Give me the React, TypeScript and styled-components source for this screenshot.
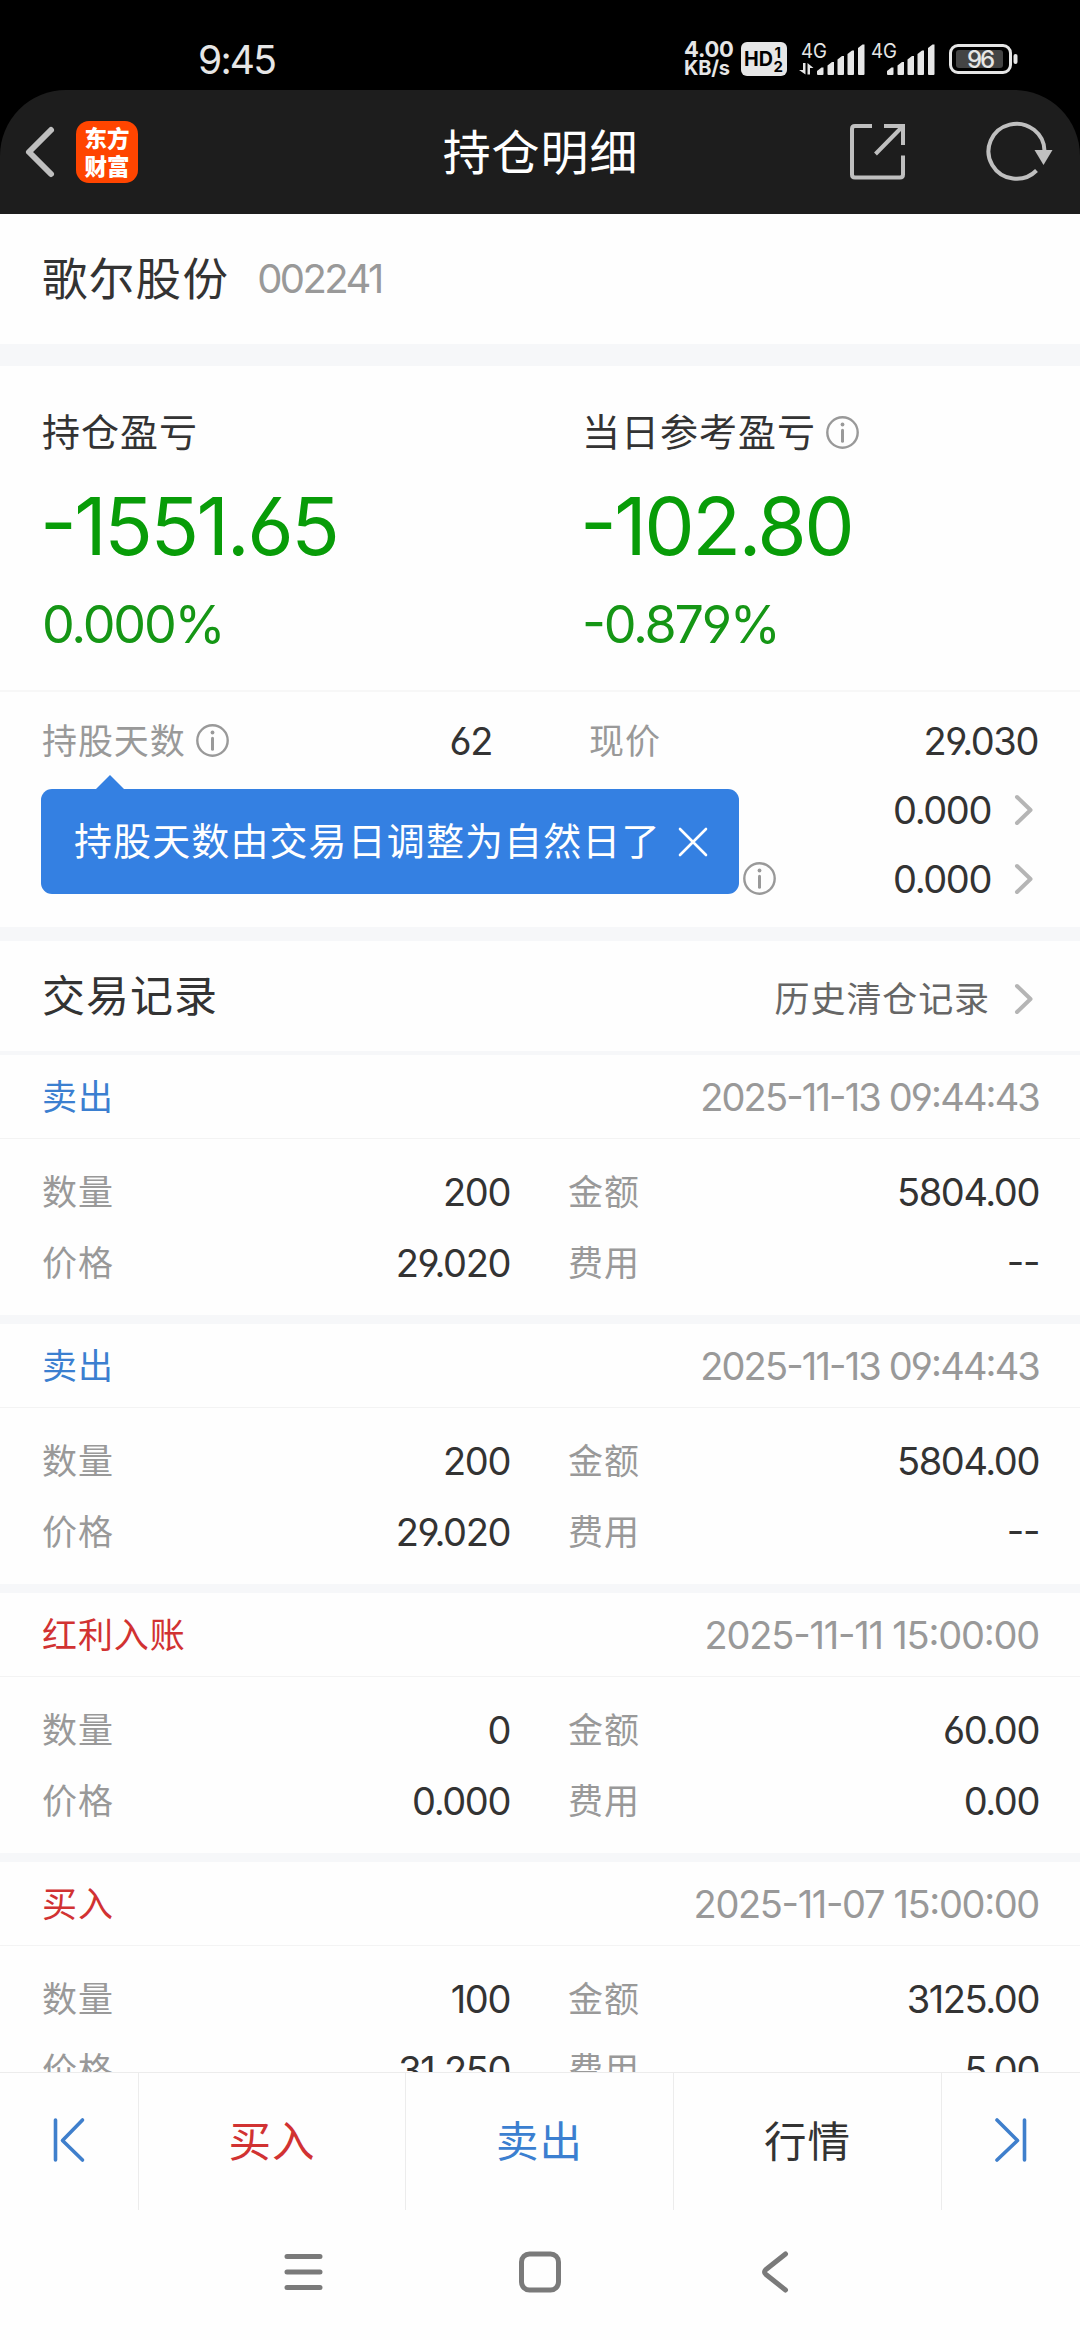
import React from 'react';
import styled, { createGlobalStyle } from 'styled-components';

const GlobalStyle = createGlobalStyle`
  *, *::before, *::after { box-sizing: border-box; }
  body { margin: 0; background: #fefefe; }
  svg { display: block; flex: none; overflow: visible; }
`;

const CJK = "'Noto Sans CJK SC', sans-serif";
const LATIN = "Inter, 'Noto Sans CJK SC', sans-serif";

const Screen = styled.div`
  width: 1080px;
  height: 2340px;
  display: flex;
  flex-direction: column;
  overflow: hidden;
  background: #fefefe;
  color: #333;
  font-family: ${CJK};
`;

/* ---------- text ---------- */

const Label = styled.span<{ $size?: number; $gap?: number; $color?: string; $weight?: number }>`
  font-family: ${CJK};
  font-size: ${(p) => p.$size ?? 35}px;
  letter-spacing: ${(p) => p.$gap ?? 0.9}px;
  color: ${(p) => p.$color ?? '#999'};
  font-weight: ${(p) => p.$weight ?? 400};
  line-height: 1;
  margin-bottom: 0.11em;
  white-space: nowrap;
`;

const Figure = styled.span<{ $size?: number; $gap?: number; $color?: string; $weight?: number }>`
  font-family: ${LATIN};
  font-size: ${(p) => p.$size ?? 38}px;
  letter-spacing: ${(p) => p.$gap ?? -1.4}px;
  color: ${(p) => p.$color ?? '#333'};
  font-weight: ${(p) => p.$weight ?? 400};
  font-feature-settings: 'cv03', 'cv04', 'case';
  line-height: 1;
  white-space: nowrap;
`;

const HeroFigure = styled(Figure)`
  font-size: 80px;
  letter-spacing: -2.5px;
  color: #089c08;
  margin-left: -2px;
`;

const PercentFigure = styled(Figure)`
  font-size: 52px;
  letter-spacing: -2.2px;
  color: #159615;
`;

/* ---------- status bar and title bar ---------- */

const TopArea = styled.header`
  flex: none;
  height: 214px;
  background: #000;
`;

const StatusBar = styled.div`
  height: 90px;
  padding: 30px 61px 0 198px;
  display: flex;
  justify-content: space-between;
`;

const Clock = styled.span`
  font: 400 39px/60px ${LATIN};
  color: #e6e6e6;
  letter-spacing: -1.8px;
`;

const StatusIcons = styled.div`
  display: flex;
  height: 58px;
  align-items: center;
`;

const NetSpeed = styled.div`
  width: 50px;
  margin-right: 7px;
  display: flex;
  flex-direction: column;
  font: 700 22px/19px ${LATIN};
  color: #e6e6e6;
  letter-spacing: -0.2px;
`;

const SpeedUnit = styled.span`
  font-size: 20px;
  letter-spacing: -0.2px;
`;

const TitleBar = styled.div`
  height: 124px;
  border-radius: 66px 66px 0 0;
  background: #1d1d1d;
  display: grid;
  grid-template-columns: 1fr auto 1fr;
  align-items: center;
  padding: 0 26px 0 24px;
`;

const TitleLeft = styled.div`
  display: flex;
  align-items: center;
  gap: 20px;
`;

const TitleRight = styled.div`
  display: flex;
  align-items: center;
  justify-content: flex-end;
  gap: 80px;
`;

const Logo = styled.div`
  width: 62px;
  height: 62px;
  border-radius: 13px;
  background: #ff4500;
  color: #fff;
  font: 900 22.5px/27px ${CJK};
  text-align: center;
  padding-top: 3px;
`;

const LogoLine = styled.div`
  height: 27.5px;
`;

const PageTitle = styled(Label)`
  font-size: 48px;
  letter-spacing: 0.9px;
  color: #fff;
  padding-left: 3px;
`;

/* ---------- sections ---------- */

const Content = styled.main`
  flex: none;
  height: 1858px;
  overflow: hidden;
`;

const Band = styled.div<{ $h: number }>`
  height: ${(p) => p.$h}px;
  background: #f6f7f9;
`;

const Stock = styled.section`
  height: 130px;
  padding: 0 42px;
  display: flex;
  align-items: center;
  gap: 28px;
`;

const Summary = styled.section`
  height: 326px;
  padding: 41px 0 0 42px;
  display: grid;
  grid-template-columns: 540px 1fr;
  border-bottom: 2px solid #f7f7f7;
`;

const SummaryColumn = styled.div`
  display: flex;
  flex-direction: column;
`;

const SummaryLine = styled.div<{ $h: number }>`
  height: ${(p) => p.$h}px;
  display: flex;
  align-items: center;
  gap: 10px;
`;

const Details = styled.section`
  position: relative;
  height: 235px;
  padding: 14px 42px 0;
`;

const DetailRow = styled.div`
  height: 69px;
  display: grid;
  grid-template-columns: 450px 97px 1fr auto;
  align-items: center;
`;

const DetailCell = styled.div<{ $pull?: number }>`
  display: flex;
  align-items: center;
  gap: 10px;
  margin-left: ${(p) => p.$pull ?? 0}px;
`;

const DetailMain = styled(DetailCell)`
  justify-content: space-between;
`;

const LinkedValue = styled.div`
  display: flex;
  align-items: center;
  gap: 24px;
  padding-right: 5px;
`;

const Tooltip = styled.div`
  position: absolute;
  left: 41px;
  top: 97px;
  width: 698px;
  height: 105px;
  border-radius: 11px;
  background: #3480e2;
  display: flex;
  align-items: center;
  padding-left: 33px;
  gap: 17px;

  &::before {
    content: '';
    position: absolute;
    left: 55px;
    top: -14px;
    border: solid transparent;
    border-width: 0 14px 14px;
    border-bottom-color: #3480e2;
  }
`;

const SectionHead = styled.div`
  height: 110px;
  padding: 0 47px 0 42px;
  display: flex;
  align-items: center;
  justify-content: space-between;
`;

const HeadLink = styled.div`
  display: flex;
  align-items: center;
  gap: 25px;
  padding-top: 5px;
`;

const RecordTop = styled.div`
  height: 84px;
  padding: 0 41px 0 42px;
  display: flex;
  align-items: center;
  justify-content: space-between;
  border-bottom: 1px solid #f3f3f3;
`;

const RecordBody = styled.div`
  height: 176px;
  padding: 17px 41px 0 42px;
  display: grid;
  grid-template-columns: 468px 58px 1fr;
  grid-template-rows: 71px 71px;
`;

const Pair = styled.div<{ $col: number }>`
  grid-column: ${(p) => p.$col};
  display: flex;
  align-items: center;
  justify-content: space-between;
`;

/* ---------- bottom ---------- */

const ActionBar = styled.nav`
  flex: none;
  height: 138px;
  display: grid;
  grid-template-columns: 139px 267px 268px 268px 138px;
  border-top: 1px solid #ececec;
`;

const Action = styled.div`
  display: flex;
  align-items: center;
  justify-content: center;
  border-right: 1px solid #ececec;

  &:last-child { border-right: 0; }
`;

const SystemNav = styled.div`
  flex: none;
  height: 130px;
  display: flex;
  justify-content: center;
  align-items: center;
  gap: 192px;
  padding-bottom: 6px;
`;

/* ---------- icons ---------- */

const InfoIcon = () => (
  <svg width="33" height="33" viewBox="0 0 33 33" fill="none" stroke="#999">
    <circle cx="16.5" cy="16.5" r="15.2" strokeWidth="2.4" />
    <circle cx="16.5" cy="8.5" r="1.9" fill="#999" stroke="none" />
    <path d="M16.5 14.2v11" strokeWidth="3" strokeLinecap="round" />
  </svg>
);

const ArrowRight = () => (
  <svg width="18" height="30" viewBox="0 0 18 30" fill="none">
    <path d="M2 2 L15.5 15 L2 28" stroke="#b5b5b5" strokeWidth="4" strokeLinecap="round" strokeLinejoin="round" />
  </svg>
);

const EdgeIcon = ({ flip }: { flip?: boolean }) => (
  <svg width="34" height="50" viewBox="0 0 34 50" fill="none" stroke="#3f7fcc" strokeWidth="3.6" strokeLinecap="round" strokeLinejoin="round">
    {flip ? (
      <path d="M30.5 3v40M3 3l20.5 20.5L3 43" />
    ) : (
      <path d="M3.5 3v40M30.5 3L10.5 23.5L30.5 43" />
    )}
  </svg>
);

const Bars = ({ arrows }: { arrows?: boolean }) => (
  <svg width="68" height="36" viewBox="0 0 68 36" fill="#e6e6e6">
    <text x="3" y="17" fontFamily="Inter" fontSize="19.5" textLength="26" lengthAdjust="spacingAndGlyphs">4G</text>
    {arrows && <path d="M5 22h2.500v11.5L1 29h4zM9.500 33.500V22l6 5h-3.500v6.500z" />}
    {[
      [19, 26.5],
      [29.5, 21],
      [39.5, 15],
      [49.5, 9.5],
      [60, 3.5],
    ].map(([x, y]) => (
      <path key={x} d={`M${x} ${y + 3.6}L${x + 4.5} ${y}h2V33q0 1 -1 1h-4.5q-1 0 -1 -1z`} />
    ))}
  </svg>
);

const HdBadge = () => (
  <svg width="46" height="34" viewBox="0 0 46 34" fill="#000" fontFamily="Inter" fontWeight="700">
    <rect width="46" height="34" rx="6" fill="#e6e6e6" />
    <text x="3" y="24" fontSize="19.5" textLength="29" lengthAdjust="spacingAndGlyphs">HD</text>
    <text x="33.5" y="15.500" fontSize="15">1</text>
    <text x="32.5" y="30" fontSize="15">2</text>
  </svg>
);

const Battery = () => (
  <svg width="70" height="31" viewBox="0 0 70 31">
    <rect x="1.5" y="1.5" width="60" height="27" rx="7.5" fill="none" stroke="#e6e6e6" strokeWidth="3" />
    <rect x="7" y="6" width="47" height="18" rx="3" fill="#444" />
    <rect x="64.5" y="10" width="4" height="10" rx="2" fill="#e6e6e6" />
    <text x="31" y="23.6" textAnchor="middle" fontFamily="Inter" fontWeight="500" fontSize="24" letterSpacing="-2" fill="#e6e6e6">96</text>
  </svg>
);

const BackIcon = () => (
  <svg width="32" height="52" viewBox="0 0 32 52" fill="none">
    <path d="M27 4L5 26L27 48" stroke="#bfbfbf" strokeWidth="6" strokeLinecap="round" strokeLinejoin="round" />
  </svg>
);

const ShareIcon = () => (
  <svg width="56" height="56" viewBox="0 0 56 56" fill="none" stroke="#bfbfbf" strokeWidth="4">
    <path d="M22 2H5Q2 2 2 5V50.5Q2 53.5 5 53.5H50Q53 53.5 53 50.5V31.5" />
    <path d="M34 2H53V21M52 3L25.5 30" />
  </svg>
);

const RefreshIcon = () => (
  <svg width="68" height="60" viewBox="0 0 68 60" fill="none">
    <path d="M58.5 30A28 27.5 0 1 0 50.5 48.5" stroke="#bfbfbf" strokeWidth="4" />
    <path d="M48.5 28H66.500L57.5 43z" fill="#bfbfbf" />
  </svg>
);

/* ---------- data ---------- */

const BLUE = '#3b7fd0';
const RED = '#d13232';

type Trade = {
  kind: string;
  color: string;
  time: string;
  timeGap: number;
  count: string;
  amount: string;
  price: string;
  fee: string;
};

const trades: Trade[] = [
  { kind: '卖出', color: BLUE, time: '2025-11-13 09:44:43', timeGap: -1.85, count: '200', amount: '5804.00', price: '29.020', fee: '--' },
  { kind: '卖出', color: BLUE, time: '2025-11-13 09:44:43', timeGap: -1.85, count: '200', amount: '5804.00', price: '29.020', fee: '--' },
  { kind: '红利入账', color: RED, time: '2025-11-11 15:00:00', timeGap: -1.2, count: '0', amount: '60.00', price: '0.000', fee: '0.00' },
  { kind: '买入', color: RED, time: '2025-11-07 15:00:00', timeGap: -1.35, count: '100', amount: '3125.00', price: '31.250', fee: '5.00' },
];

const Record = ({ trade }: { trade: Trade }) => (
  <article>
    <RecordTop>
      <Label $color={trade.color}>{trade.kind}</Label>
      <Figure $color="#999" $gap={trade.timeGap}>{trade.time}</Figure>
    </RecordTop>
    <RecordBody>
      <Pair $col={1}>
        <Label>数量</Label>
        <Figure>{trade.count}</Figure>
      </Pair>
      <Pair $col={3}>
        <Label>金额</Label>
        <Figure>{trade.amount}</Figure>
      </Pair>
      <Pair $col={1}>
        <Label>价格</Label>
        <Figure>{trade.price}</Figure>
      </Pair>
      <Pair $col={3}>
        <Label>费用</Label>
        <Figure>{trade.fee}</Figure>
      </Pair>
    </RecordBody>
    <Band $h={9} />
  </article>
);

export default function App() {
  return (
    <Screen>
      <GlobalStyle />
      <TopArea>
        <StatusBar>
          <Clock>9:45</Clock>
          <StatusIcons>
            <NetSpeed>
              <span>4.00</span>
              <SpeedUnit>KB/s</SpeedUnit>
            </NetSpeed>
            <HdBadge />
            <svg width="11" height="1" />
            <Bars arrows />
            <svg width="2" height="1" />
            <Bars />
            <svg width="13" height="1" />
            <Battery />
          </StatusIcons>
        </StatusBar>
        <TitleBar>
          <TitleLeft>
            <BackIcon />
            <Logo>
              <LogoLine>东方</LogoLine>
              <LogoLine>财富</LogoLine>
            </Logo>
          </TitleLeft>
          <PageTitle>持仓明细</PageTitle>
          <TitleRight>
            <ShareIcon />
            <RefreshIcon />
          </TitleRight>
        </TitleBar>
      </TopArea>

      <Content>
        <Stock>
          <Label $size={45.5} $gap={1.3} $color="#333">歌尔股份</Label>
          <Figure $size={40} $gap={-2.6} $color="#999">002241</Figure>
        </Stock>
        <Band $h={22} />
        <Summary>
          <SummaryColumn>
            <SummaryLine $h={50}>
              <Label $size={38} $gap={1} $color="#333">持仓盈亏</Label>
            </SummaryLine>
            <SummaryLine $h={137}>
              <HeroFigure>-1551.65</HeroFigure>
            </SummaryLine>
            <SummaryLine $h={62}>
              <PercentFigure>0.000%</PercentFigure>
            </SummaryLine>
          </SummaryColumn>
          <SummaryColumn>
            <SummaryLine $h={50}>
              <Label $size={38} $gap={1} $color="#333">当日参考盈亏</Label>
              <InfoIcon />
            </SummaryLine>
            <SummaryLine $h={137}>
              <HeroFigure>-102.80</HeroFigure>
            </SummaryLine>
            <SummaryLine $h={62}>
              <PercentFigure>-0.879%</PercentFigure>
            </SummaryLine>
          </SummaryColumn>
        </Summary>

        <Details>
          <DetailRow>
            <DetailMain>
              <DetailCell>
                <Label>持股天数</Label>
                <InfoIcon />
              </DetailCell>
              <Figure>62</Figure>
            </DetailMain>
            <span />
            <Label>现价</Label>
            <Figure>29.030</Figure>
          </DetailRow>
          <DetailRow>
            <span />
            <span />
            <span />
            <LinkedValue>
              <Figure>0.000</Figure>
              <ArrowRight />
            </LinkedValue>
          </DetailRow>
          <DetailRow>
            <span />
            <span />
            <DetailCell $pull={154}>
              <InfoIcon />
            </DetailCell>
            <LinkedValue>
              <Figure>0.000</Figure>
              <ArrowRight />
            </LinkedValue>
          </DetailRow>
          <Tooltip>
            <Label $size={38} $gap={1.1} $color="#fff">持股天数由交易日调整为自然日了</Label>
            <svg width="30" height="30" viewBox="0 0 30 30">
              <path d="M2 2L28 28M28 2L2 28" stroke="#fff" strokeWidth="2.6" strokeLinecap="round" />
            </svg>
          </Tooltip>
        </Details>

        <Band $h={14} />
        <SectionHead>
          <Label $size={43} $gap={1} $color="#333">交易记录</Label>
          <HeadLink>
            <Label $color="#666">历史清仓记录</Label>
            <ArrowRight />
          </HeadLink>
        </SectionHead>
        <Band $h={4} />
        {trades.map((trade, i) => (
          <Record key={i} trade={trade} />
        ))}
      </Content>

      <ActionBar>
        <Action><EdgeIcon /></Action>
        <Action><Label $size={42.5} $gap={1} $color={RED}>买入</Label></Action>
        <Action><Label $size={42.5} $gap={1} $color={BLUE}>卖出</Label></Action>
        <Action><Label $size={42.5} $gap={1} $color="#333">行情</Label></Action>
        <Action><EdgeIcon flip /></Action>
      </ActionBar>

      <SystemNav>
        <svg width="44" height="44" viewBox="0 0 44 44" fill="none" stroke="#7a7a7a" strokeWidth="5" strokeLinecap="round">
          <path d="M5 6.5h33M5 22h33M5 37.5h33" />
        </svg>
        <svg width="44" height="44" viewBox="0 0 44 44" fill="none" stroke="#7a7a7a" strokeWidth="5">
          <rect x="3.5" y="4" width="37" height="36" rx="8" />
        </svg>
        <svg width="44" height="44" viewBox="0 0 44 44" fill="none" stroke="#7a7a7a" strokeWidth="5" strokeLinecap="round">
          <path d="M31.5 4L12 19.5Q9 22 12 24.5L31.5 40" />
        </svg>
      </SystemNav>
    </Screen>
  );
}
